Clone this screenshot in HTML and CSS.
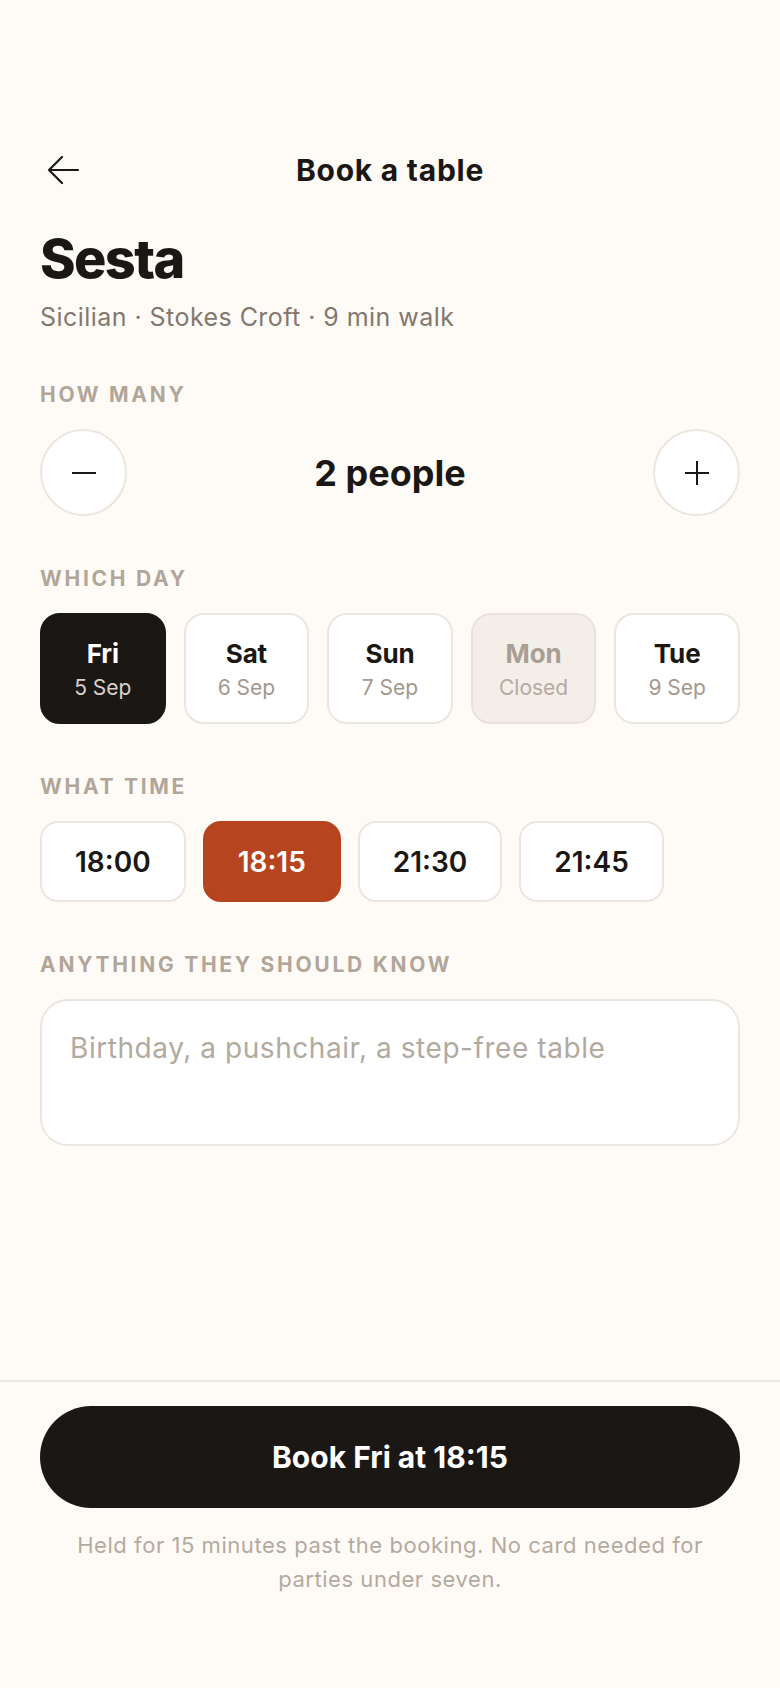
FILE: index.html
```html
<!DOCTYPE html>
<html lang="en">
<head>
<meta charset="utf-8">
<meta name="viewport" content="width=device-width, initial-scale=1">
<title>Book a table</title>
<link rel="stylesheet" href="styles.css">
</head>
<body>
<main class="main">
  <header class="topbar">
    <button class="back" aria-label="Back">
      <svg width="32" height="32" viewBox="0 0 32 32" fill="none" stroke="#1b1714" stroke-width="2.2" stroke-linecap="round" stroke-linejoin="round"><path d="M31 16H2M15 3L2 16l13 13"/></svg>
    </button>
    <h1 class="title">Book a table</h1>
    <span class="spacer"></span>
  </header>

  <section class="venue">
    <h2 class="venue-name">Sesta</h2>
    <p class="venue-meta">Sicilian · Stokes Croft · 9 min walk</p>
  </section>

  <section class="block block-first">
    <div class="label">How many</div>
    <div class="stepper">
      <button class="step" aria-label="Fewer">
        <svg width="26" height="26" viewBox="0 0 26 26" fill="none" stroke="#1b1714" stroke-width="2"><path d="M1 13h24"/></svg>
      </button>
      <div class="count">2 people</div>
      <button class="step" aria-label="More">
        <svg width="26" height="26" viewBox="0 0 26 26" fill="none" stroke="#1b1714" stroke-width="2"><path d="M1 13h24M13 1v24"/></svg>
      </button>
    </div>
  </section>

  <section class="block">
    <div class="label">Which day</div>
    <div class="days">
      <button class="day day-on"><span class="day-name">Fri</span><span class="day-date">5 Sep</span></button>
      <button class="day"><span class="day-name">Sat</span><span class="day-date">6 Sep</span></button>
      <button class="day"><span class="day-name">Sun</span><span class="day-date">7 Sep</span></button>
      <button class="day day-off"><span class="day-name">Mon</span><span class="day-date">Closed</span></button>
      <button class="day"><span class="day-name">Tue</span><span class="day-date">9 Sep</span></button>
    </div>
  </section>

  <section class="block">
    <div class="label">What time</div>
    <div class="times">
      <button class="time">18:00</button>
      <button class="time time-on">18:15</button>
      <button class="time">21:30</button>
      <button class="time">21:45</button>
    </div>
  </section>

  <section class="block">
    <div class="label">Anything they should know</div>
    <textarea class="notes" placeholder="Birthday, a pushchair, a step-free table"></textarea>
  </section>
</main>

<footer class="footer">
  <button class="cta">Book Fri at 18:15</button>
  <p class="fineprint">Held for 15 minutes past the booking. No card needed for parties under seven.</p>
</footer>
</body>
</html>
```

FILE: styles.css
```css
* { box-sizing: border-box; }

html, body {
  margin: 0;
  padding: 0;
}

body {
  background: #fefbf7;
  color: #1b1714;
  font-family: Inter, "Noto Sans", "Liberation Sans", sans-serif;
  min-height: 100vh;
  display: flex;
  flex-direction: column;
}

button {
  font-family: inherit;
  color: inherit;
  cursor: pointer;
}

.main {
  flex: 1;
  padding: 146px 40px 0;
}

.topbar {
  display: grid;
  grid-template-columns: 48px 1fr 48px;
  align-items: center;
  height: 48px;
}

.back {
  width: 48px;
  height: 48px;
  padding: 0;
  border: 0;
  background: none;
  display: flex;
  align-items: center;
  justify-content: flex-start;
  padding-left: 7px;
}

.title {
  margin: 0;
  text-align: center;
  font-size: 30px;
  font-weight: 700;
  letter-spacing: 0.025em;
  line-height: 1;
}

.venue {
  margin-top: 35px;
}

.venue-name {
  margin: 0;
  font-size: 54px;
  font-weight: 800;
  letter-spacing: -0.03em;
  line-height: 1.1;
}

.venue-meta {
  margin: 12px 0 0;
  font-size: 25px;
  line-height: 1.4;
  letter-spacing: 0.018em;
  color: #82786f;
}

.block {
  margin-top: 51px;
}

.block-first {
  margin-top: 48px;
}

.label {
  font-size: 21px;
  line-height: 24px;
  font-weight: 700;
  letter-spacing: 0.13em;
  text-transform: uppercase;
  color: #b1a699;
  margin-bottom: 22px;
}

.stepper {
  display: flex;
  align-items: center;
  justify-content: space-between;
}

.step {
  width: 87px;
  height: 87px;
  border-radius: 50%;
  border: 2px solid #ede6de;
  background: #fff;
  display: flex;
  align-items: center;
  justify-content: center;
  padding: 0;
}

.count {
  font-size: 36px;
  font-weight: 700;
  letter-spacing: 0;
}

.days {
  display: grid;
  grid-template-columns: repeat(5, 1fr);
  gap: 18px;
}

.day {
  height: 111px;
  border-radius: 20px;
  border: 2px solid #ede6de;
  background: #fff;
  display: flex;
  flex-direction: column;
  align-items: center;
  justify-content: center;
  gap: 6px;
  padding: 0;
}

.day-name {
  font-size: 26px;
  font-weight: 700;
  line-height: 1.2;
  letter-spacing: -0.005em;
  color: #1b1714;
}

.day-date {
  font-size: 21px;
  line-height: 1.2;
  color: #a2988e;
}

.day-on {
  background: #1b1714;
  border-color: #1b1714;
}

.day-on .day-name { color: #fff; }
.day-on .day-date { color: #d9d2ca; }

.day-off {
  background: #f4eee8;
  border-color: #ebe3da;
}

.day-off .day-name { color: #a89e94; }
.day-off .day-date { color: #b3aaa0; }

.times {
  display: flex;
  gap: 17px;
}

.time {
  height: 81px;
  padding: 0 33px;
  border-radius: 18px;
  border: 2px solid #ede6de;
  background: #fff;
  font-size: 28px;
  font-weight: 600;
  letter-spacing: 0;
}

.time-on {
  background: #b5441f;
  border-color: #b5441f;
  color: #fff;
}

.notes {
  display: block;
  width: 100%;
  height: 147px;
  border: 2px solid #ede6de;
  border-radius: 28px;
  background: #fff;
  padding: 28px 28px;
  font-family: Inter, "Noto Sans", "Liberation Sans", sans-serif;
  font-size: 28px;
  line-height: 1.4;
  letter-spacing: 0.02em;
  color: #1b1714;
  resize: none;
  outline: none;
}

.notes::placeholder {
  color: #b2a99f;
}

.footer {
  border-top: 2px solid #ede7df;
  padding: 24px 40px 92px;
}

.cta {
  display: block;
  width: 100%;
  height: 102px;
  border: 0;
  border-radius: 51px;
  background: #1b1714;
  color: #fff;
  font-size: 30px;
  font-weight: 700;
  letter-spacing: 0;
}

.fineprint {
  margin: 20px auto 0;
  max-width: 660px;
  text-align: center;
  font-size: 22px;
  line-height: 34px;
  letter-spacing: 0.025em;
  color: #b3aaa0;
}
```
